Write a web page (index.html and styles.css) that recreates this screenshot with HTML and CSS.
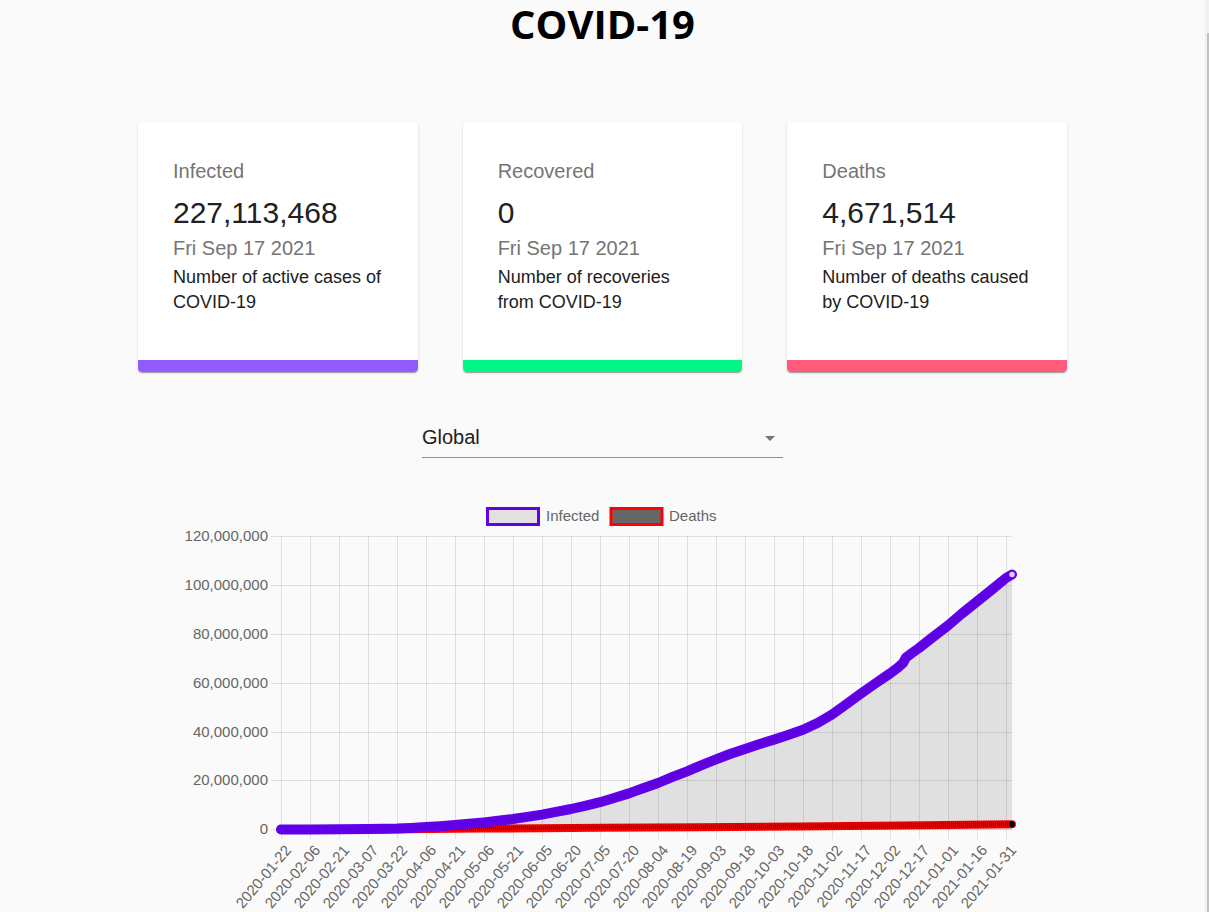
FILE: index.html
```html
<!DOCTYPE html>
<html lang="en">
<head>
<meta charset="utf-8">
<title>COVID-19</title>
<link rel="stylesheet" href="styles.css">
</head>
<body>
<div class="page">
  <h1 class="title">COVID-19</h1>

  <div class="cards">
    <div class="card">
      <div class="card-body">
        <div class="card-label">Infected</div>
        <div class="card-value">227,113,468</div>
        <div class="card-date">Fri Sep 17 2021</div>
        <div class="card-desc">Number of active cases of COVID-19</div>
      </div>
      <div class="card-bar bar-infected"></div>
    </div>
    <div class="card">
      <div class="card-body">
        <div class="card-label">Recovered</div>
        <div class="card-value">0</div>
        <div class="card-date">Fri Sep 17 2021</div>
        <div class="card-desc">Number of recoveries from COVID-19</div>
      </div>
      <div class="card-bar bar-recovered"></div>
    </div>
    <div class="card">
      <div class="card-body">
        <div class="card-label">Deaths</div>
        <div class="card-value">4,671,514</div>
        <div class="card-date">Fri Sep 17 2021</div>
        <div class="card-desc">Number of deaths caused by COVID-19</div>
      </div>
      <div class="card-bar bar-deaths"></div>
    </div>
  </div>

  <div class="select">
    <span class="select-value">Global</span>
    <svg class="select-icon" viewBox="0 0 24 24" width="24" height="24"><path d="M7 10l5 5 5-5z"/></svg>
  </div>

  <div class="chart">
    <svg class="chart-svg" width="839" height="416" viewBox="183 496 839 416">
      <!-- legend -->
      <rect x="487.5" y="508.5" width="51" height="16" fill="#e1e1e1" stroke="#6200ea" stroke-width="3"/>
      <text class="lbl" x="546" y="517" dominant-baseline="middle">Infected</text>
      <rect x="611" y="508.5" width="51" height="16" fill="#666666" stroke="#ff0000" stroke-width="3"/>
      <text class="lbl" x="669" y="517" dominant-baseline="middle">Deaths</text>

      <!-- horizontal grid -->
      <g class="grid">
        <line x1="271" y1="536.5" x2="1012" y2="536.5"/>
        <line x1="271" y1="585.5" x2="1012" y2="585.5"/>
        <line x1="271" y1="634.5" x2="1012" y2="634.5"/>
        <line x1="271" y1="683.5" x2="1012" y2="683.5"/>
        <line x1="271" y1="732.5" x2="1012" y2="732.5"/>
        <line x1="271" y1="780.5" x2="1012" y2="780.5"/>
        <line x1="271" y1="829.5" x2="1012" y2="829.5"/>
      </g>
      <!-- vertical grid -->
      <g class="grid">
        <line x1="281.5" y1="536" x2="281.5" y2="839"/>
        <line x1="310.5" y1="536" x2="310.5" y2="839"/>
        <line x1="339.5" y1="536" x2="339.5" y2="839"/>
        <line x1="368.5" y1="536" x2="368.5" y2="839"/>
        <line x1="397.5" y1="536" x2="397.5" y2="839"/>
        <line x1="426.5" y1="536" x2="426.5" y2="839"/>
        <line x1="455.5" y1="536" x2="455.5" y2="839"/>
        <line x1="484.5" y1="536" x2="484.5" y2="839"/>
        <line x1="513.5" y1="536" x2="513.5" y2="839"/>
        <line x1="542.5" y1="536" x2="542.5" y2="839"/>
        <line x1="571.5" y1="536" x2="571.5" y2="839"/>
        <line x1="600.5" y1="536" x2="600.5" y2="839"/>
        <line x1="629.5" y1="536" x2="629.5" y2="839"/>
        <line x1="658.5" y1="536" x2="658.5" y2="839"/>
        <line x1="687.5" y1="536" x2="687.5" y2="839"/>
        <line x1="716.5" y1="536" x2="716.5" y2="839"/>
        <line x1="745.5" y1="536" x2="745.5" y2="839"/>
        <line x1="774.5" y1="536" x2="774.5" y2="839"/>
        <line x1="803.5" y1="536" x2="803.5" y2="839"/>
        <line x1="832.5" y1="536" x2="832.5" y2="839"/>
        <line x1="861.5" y1="536" x2="861.5" y2="839"/>
        <line x1="890.5" y1="536" x2="890.5" y2="839"/>
        <line x1="919.5" y1="536" x2="919.5" y2="839"/>
        <line x1="948.5" y1="536" x2="948.5" y2="839"/>
        <line x1="977.5" y1="536" x2="977.5" y2="839"/>
        <line x1="1006.5" y1="536" x2="1006.5" y2="839"/>
      </g>

      <!-- y labels -->
      <g class="lbl ylbl">
        <text x="268" y="537" dominant-baseline="middle">120,000,000</text>
        <text x="268" y="586" dominant-baseline="middle">100,000,000</text>
        <text x="268" y="635" dominant-baseline="middle">80,000,000</text>
        <text x="268" y="684" dominant-baseline="middle">60,000,000</text>
        <text x="268" y="733" dominant-baseline="middle">40,000,000</text>
        <text x="268" y="781" dominant-baseline="middle">20,000,000</text>
        <text x="268" y="830" dominant-baseline="middle">0</text>
      </g>

      <!-- x labels -->
      <g class="lbl xlbl">
        <text x="289" y="848" transform="rotate(-50 289 848)">2020-01-22</text>
        <text x="318" y="848" transform="rotate(-50 318 848)">2020-02-06</text>
        <text x="347" y="848" transform="rotate(-50 347 848)">2020-02-21</text>
        <text x="376" y="848" transform="rotate(-50 376 848)">2020-03-07</text>
        <text x="405" y="848" transform="rotate(-50 405 848)">2020-03-22</text>
        <text x="434" y="848" transform="rotate(-50 434 848)">2020-04-06</text>
        <text x="463" y="848" transform="rotate(-50 463 848)">2020-04-21</text>
        <text x="492" y="848" transform="rotate(-50 492 848)">2020-05-06</text>
        <text x="521" y="848" transform="rotate(-50 521 848)">2020-05-21</text>
        <text x="550" y="848" transform="rotate(-50 550 848)">2020-06-05</text>
        <text x="579" y="848" transform="rotate(-50 579 848)">2020-06-20</text>
        <text x="608" y="848" transform="rotate(-50 608 848)">2020-07-05</text>
        <text x="637" y="848" transform="rotate(-50 637 848)">2020-07-20</text>
        <text x="666" y="848" transform="rotate(-50 666 848)">2020-08-04</text>
        <text x="695" y="848" transform="rotate(-50 695 848)">2020-08-19</text>
        <text x="724" y="848" transform="rotate(-50 724 848)">2020-09-03</text>
        <text x="753" y="848" transform="rotate(-50 753 848)">2020-09-18</text>
        <text x="782" y="848" transform="rotate(-50 782 848)">2020-10-03</text>
        <text x="811" y="848" transform="rotate(-50 811 848)">2020-10-18</text>
        <text x="840" y="848" transform="rotate(-50 840 848)">2020-11-02</text>
        <text x="869" y="848" transform="rotate(-50 869 848)">2020-11-17</text>
        <text x="898" y="848" transform="rotate(-50 898 848)">2020-12-02</text>
        <text x="927" y="848" transform="rotate(-50 927 848)">2020-12-17</text>
        <text x="956" y="848" transform="rotate(-50 956 848)">2021-01-01</text>
        <text x="985" y="848" transform="rotate(-50 985 848)">2021-01-16</text>
        <text x="1014" y="848" transform="rotate(-50 1014 848)">2021-01-31</text>
      </g>

      <!-- deaths series -->
      <polyline class="line-deaths" points="281,829.5 380,829.5 430,829 480,828.6 540,828.2 600,827.8 700,827.2 800,826.5 900,825.5 1012,824.2"/>
      <polyline class="line-deaths-tex" points="281,829.5 380,829.5 430,829 480,828.6 540,828.2 600,827.8 700,827.2 800,826.5 900,825.5 1012,824.2"/>
      <circle cx="1012" cy="824.2" r="3" fill="#000"/>

      <!-- infected area -->
      <polygon class="area" points="281,829.5 310,829.4 339,829.2 368,829 397,828.5 411,827.9 426,827.1 440,826.2 455,825.1 469,823.8 484,822.4 498,820.8 513,819 527,816.9 542,814.6 556,811.9 571,809 585,805.8 600,802.2 614,798 629,793.4 643,788.3 658,783 672,777.2 687,771.3 701,765.3 716,759.4 730,754 745,748.9 759,744.2 774,739.6 788,735 803,729.8 818,722.8 832,714.5 846,704.5 861,693.5 876,683 890,673.5 898,667.5 903,663 906,657.5 912,653 919,648 933,637 948,625.5 962,613.5 977,601.5 992,589.5 1006,578 1012,574.5 1012,829.5"/>
      <polyline class="line-infected" points="281,829.5 310,829.4 339,829.2 368,829 397,828.5 411,827.9 426,827.1 440,826.2 455,825.1 469,823.8 484,822.4 498,820.8 513,819 527,816.9 542,814.6 556,811.9 571,809 585,805.8 600,802.2 614,798 629,793.4 643,788.3 658,783 672,777.2 687,771.3 701,765.3 716,759.4 730,754 745,748.9 759,744.2 774,739.6 788,735 803,729.8 818,722.8 832,714.5 846,704.5 861,693.5 876,683 890,673.5 898,667.5 903,663 906,657.5 912,653 919,648 933,637 948,625.5 962,613.5 977,601.5 992,589.5 1006,578 1012,574.5"/>
      <polyline class="line-infected-tex" points="281,829.5 310,829.4 339,829.2 368,829 397,828.5 411,827.9 426,827.1 440,826.2 455,825.1 469,823.8 484,822.4 498,820.8 513,819 527,816.9 542,814.6 556,811.9 571,809 585,805.8 600,802.2 614,798 629,793.4 643,788.3 658,783 672,777.2 687,771.3 701,765.3 716,759.4 730,754 745,748.9 759,744.2 774,739.6 788,735 803,729.8 818,722.8 832,714.5 846,704.5 861,693.5 876,683 890,673.5 898,667.5 903,663 906,657.5 912,653 919,648 933,637 948,625.5 962,613.5 977,601.5 992,589.5 1006,578 1012,574.5"/>
      <circle cx="1012" cy="574.5" r="3.5" fill="#d9cff2" stroke="#6200ea" stroke-width="1.5"/>
    </svg>
  </div>
</div>
<div class="scrollbar"><div class="scrollbar-thumb"></div></div>
</body>
</html>
```

FILE: styles.css
```css
html, body {
  margin: 0;
  padding: 0;
  background: #fafafa;
}
html {
  overflow: hidden;
}
body {
  font-family: "Liberation Sans", Arial, sans-serif;
  color: rgba(0, 0, 0, 0.87);
}
.page {
  width: 1205px;
}
.title {
  margin: 0;
  padding-top: 4px;
  font-family: "Open Sans", "Noto Sans", sans-serif;
  font-weight: 700;
  font-size: 40px;
  line-height: 40px;
  text-align: center;
  color: #000;
}
.cards {
  display: flex;
  justify-content: center;
  gap: 45px;
  margin-top: 78px;
}
.card {
  width: 279.7px;
  background: #fff;
  border-radius: 4px;
  overflow: hidden;
  box-shadow: 0 2px 1px -1px rgba(0,0,0,0.2), 0 1px 1px 0 rgba(0,0,0,0.14), 0 1px 3px 0 rgba(0,0,0,0.12);
  display: flex;
  flex-direction: column;
}
.card-body {
  height: 238px;
  box-sizing: border-box;
  padding: 35px 35px 0 35px;
}
.card-label {
  font-size: 20px;
  line-height: 28px;
  color: #757575;
}
.card-value {
  margin-top: 10px;
  font-size: 30px;
  line-height: 36px;
  color: #212121;
}
.card-date {
  margin-top: 3px;
  font-size: 20px;
  line-height: 28px;
  color: #757575;
}
.card-desc {
  margin-top: 3px;
  font-size: 18px;
  line-height: 25px;
  color: #212121;
}
.card-bar {
  height: 12px;
}
.bar-infected { background: #935bfc; }
.bar-recovered { background: #00f784; }
.bar-deaths { background: #ff5c7b; }

.select {
  width: 361px;
  margin: 51px auto 0;
  display: flex;
  justify-content: space-between;
  align-items: flex-start;
  padding-bottom: 6px;
  border-bottom: 1px solid #8f8f8f;
}
.select-value {
  font-size: 20px;
  line-height: 28px;
  color: #212121;
}
.select-icon {
  margin-top: 3px;
  margin-right: 1px;
  fill: #757575;
}

.chart {
  width: 839px;
  height: 416px;
  margin: 38px auto 0;
}
.chart-svg {
  display: block;
}
.lbl {
  font-family: "Liberation Sans", Arial, sans-serif;
  font-size: 15px;
  fill: #666666;
}
.ylbl text {
  text-anchor: end;
}
.xlbl text {
  text-anchor: end;
  dominant-baseline: middle;
}
.grid line {
  stroke: rgba(0, 0, 0, 0.1);
  stroke-width: 1;
}
.area {
  fill: rgba(0, 0, 0, 0.1);
  stroke: none;
}
.line-infected {
  fill: none;
  stroke: #6200ea;
  stroke-width: 10;
  stroke-linecap: round;
  stroke-linejoin: round;
}
.line-infected-tex {
  fill: none;
  stroke: #3d0094;
  stroke-width: 5;
  stroke-dasharray: 0.8 1.2;
  opacity: 0.3;
}
.line-deaths {
  fill: none;
  stroke: #ff0000;
  stroke-width: 8;
  stroke-linecap: round;
  stroke-linejoin: round;
}
.line-deaths-tex {
  fill: none;
  stroke: #2a0000;
  stroke-width: 3.5;
  stroke-dasharray: 1 1;
  opacity: 0.8;
}

.scrollbar {
  position: fixed;
  top: 0;
  right: 0;
  width: 4px;
  height: 100%;
  background: #f1f1f1;
}
.scrollbar-thumb {
  margin-top: 33px;
  margin-left: 1.5px;
  width: 2px;
  height: 879px;
  background: #c1c1c1;
}
```
